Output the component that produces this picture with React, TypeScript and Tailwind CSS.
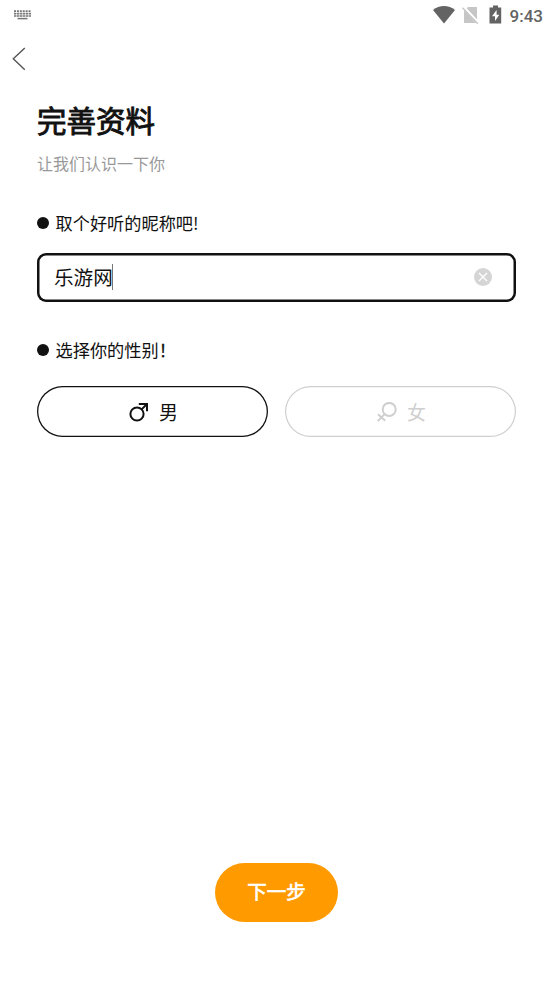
import React from 'react';

const KeyboardIcon = () => (
  <svg width="17" height="10" viewBox="0 0 17 10" fill="none" stroke="#777" strokeWidth="1.7">
    <path d="M0 1.1h17" strokeDasharray="2 0.9" />
    <path d="M0 3.7h17" strokeDasharray="2.4 0.6" />
    <path d="M0 6h17" strokeDasharray="2.5 0.5" />
    <path d="M3.5 8.6h10" strokeWidth="1.5" />
  </svg>
);

const StatusBar = () => (
  <header className="flex h-[30px] items-start justify-between pl-3.5 pr-2.5">
    <div className="pt-[10px]">
      <KeyboardIcon />
    </div>
    <div className="flex items-start">
      <svg className="mt-[6px]" width="22" height="18" viewBox="0 0 22 18" fill="#636363">
        <path d="M0 4C6.2-1.3 15.8-1.3 22 4L11 17.5z" />
      </svg>
      <svg className="ml-[7px] mt-[6px]" width="17" height="18" viewBox="0 0 17 18">
        <path d="M6 1h9v16H2V5z" fill="#c6c6c6" />
        <path d="M1.2.7l15.5 16.7" stroke="#fff" strokeWidth="3" />
        <path d="M.5 1.7l15.3 16" stroke="#c6c6c6" strokeWidth="1.4" />
      </svg>
      <svg className="ml-[10px] mt-[5px]" width="13" height="19" viewBox="0 0 13 19">
        <path d="M4 0.5h5v2h3.2v16H.5v-16H4z" fill="#636363" />
        <path d="M7.6 5L3 11.2h3V16l4.3-6.3H7.6z" fill="#fff" />
      </svg>
      <span className="ml-[8px] mt-[6px] font-[Roboto] text-[17px] font-medium leading-[21px] text-[#636363]">
        9:43
      </span>
    </div>
  </header>
);

const MaleIcon = () => (
  <svg width="20" height="20" viewBox="0 0 20 20" fill="none" stroke="#111" strokeWidth="2">
    <circle cx="8" cy="12" r="6.6" />
    <path d="M12.6 7.4L18 2M9.8 2H18v7.2" />
  </svg>
);

const FemaleIcon = () => (
  <svg width="20" height="20" viewBox="0 0 20 20" fill="none" stroke="#cfcfcf" strokeWidth="2">
    <circle cx="12.2" cy="7.4" r="6.5" />
    <path d="M7.6 12.1L.7 19.1M1 12.3l7.2 6.5" />
  </svg>
);

const FieldLabel = ({ children }: { children: React.ReactNode }) => (
  <div className="flex h-6 items-center gap-[6.5px] text-[17.2px] leading-6">
    <span className="h-3 w-3 rounded-full bg-[#111]" />
    <span className="-mt-px">{children}</span>
  </div>
);

const App = () => {
  return (
    <div className="flex h-[983px] w-[553px] flex-col bg-white font-['Noto_Sans_CJK_SC',sans-serif] text-[#111]">
      <StatusBar />

      <nav className="flex h-[58px] items-center pl-[11px]">
        <svg width="15" height="24" viewBox="0 0 15 24" fill="none" stroke="#555" strokeWidth="1.4">
          <path d="M13.8 1L2.3 11.8l11.5 10.9" />
        </svg>
      </nav>

      <main className="flex flex-1 flex-col px-[37px]">
        <h1 className="mt-[9px] text-[29.5px] leading-[44px] [-webkit-text-stroke:0.9px_#111]">完善资料</h1>
        <p className="mt-[10px] text-base leading-6 text-[#999]">让我们认识一下你</p>

        <div className="mt-[36px]">
          <FieldLabel>取个好听的昵称吧!</FieldLabel>
        </div>
        <div className="mt-[17.5px] flex h-[49px] items-center rounded-[9px] pl-[17px] pr-6 shadow-[inset_0_0_0_2.5px_#111]">
          <span className="-mt-px text-[19.6px] leading-7">乐游网</span>
          <span className="-ml-px -mt-px h-[26px] w-px bg-[#777]" />
          <svg className="-mt-px ml-auto" width="18" height="18" viewBox="0 0 18 18">
            <circle cx="9" cy="9" r="9" fill="#d5d5d5" />
            <path d="M5 5l8 8M13 5l-8 8" stroke="#fff" strokeWidth="1.3" />
          </svg>
        </div>

        <div className="mt-[36.5px]">
          <FieldLabel>
            选择你的性别<span className="[-webkit-text-stroke:0.25px_#111]">！</span>
          </FieldLabel>
        </div>
        <div className="mt-[24px] flex gap-[17px]">
          <button className="flex h-[51px] flex-1 items-center justify-center gap-[10px] rounded-full pl-[2px] pt-px text-[19px] shadow-[inset_0_0_0_1.3px_#111]">
            <MaleIcon />
            男
          </button>
          <button className="flex h-[51px] flex-1 items-center justify-center gap-[10px] rounded-full pl-[2px] pt-px text-[19px] text-[#cfcfcf] shadow-[inset_0_0_0_1.2px_#cfcfcf]">
            <FemaleIcon />
            女
          </button>
        </div>

        <button className="mx-auto mb-[61.5px] mt-auto h-[59px] w-[123px] rounded-full bg-[#ff9b00] pb-[2px] text-[19.5px] text-white [-webkit-text-stroke:0.7px_#fff]">
          下一步
        </button>
      </main>
    </div>
  );
};

export default App;
